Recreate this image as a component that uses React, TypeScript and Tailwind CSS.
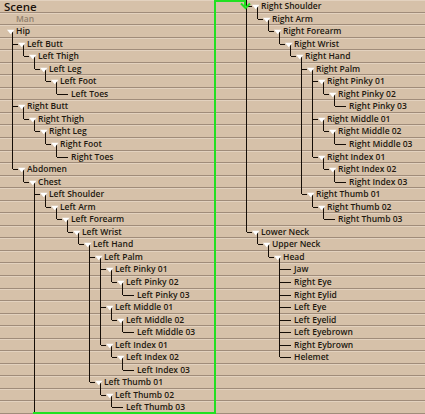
type Bone = { name: string; children?: Bone[] };
type Row = { name: string; level: number; leaf: boolean; last: boolean; rails: boolean[] };

const bone = (name: string, children?: Bone[]): Bone => ({ name, children });

const finger = (side: string, f: string) =>
  bone(`${side} ${f} 01`, [bone(`${side} ${f} 02`, [bone(`${side} ${f} 03`)])]);

const leg = (side: string) =>
  bone(`${side} Butt`, [
    bone(`${side} Thigh`, [bone(`${side} Leg`, [bone(`${side} Foot`, [bone(`${side} Toes`)])])]),
  ]);

const arm = (side: string) =>
  bone(`${side} Shoulder`, [
    bone(`${side} Arm`, [
      bone(`${side} Forearm`, [
        bone(`${side} Wrist`, [
          bone(`${side} Hand`, [
            bone(`${side} Palm`, [finger(side, "Pinky"), finger(side, "Middle"), finger(side, "Index")]),
            finger(side, "Thumb"),
          ]),
        ]),
      ]),
    ]),
  ]);

const face = ["Jaw", "Right Eye", "Right Eylid", "Left Eye", "Left Eyelid", "Left Eyebrown", "Right Eybrown", "Helemet"];

const hip = bone("Hip", [
  leg("Left"),
  leg("Right"),
  bone("Abdomen", [
    bone("Chest", [
      arm("Left"),
      arm("Right"),
      bone("Lower Neck", [bone("Upper Neck", [bone("Head", face.map((n) => bone(n)))])]),
    ]),
  ]),
]);

function flatten(b: Bone, level: number, last: boolean, rails: boolean[], out: Row[]) {
  const kids = b.children ?? [];
  out.push({ name: b.name, level, leaf: kids.length === 0, last, rails });
  const next = [...rails];
  next[level] = level > 0 && !last;
  kids.forEach((c, i) => flatten(c, level + 1, i === kids.length - 1, next, out));
  return out;
}

const rows = flatten(hip, 0, true, [], []);
const leftRows = rows.slice(0, 31);
const rightRows = rows.slice(31);

const rowCls =
  "flex min-h-0 items-center shadow-[inset_0_-1px_0_#a08c7a,inset_0_1px_0_#e3d2bf]";

function BoneRow({ row, base }: { row: Row; base: number }) {
  const textX = base + 16 + 11 * row.level;
  const at = (lvl: number) => base + 1 + 11 * lvl + 0.5;
  return (
    <div className={rowCls}>
      <svg width={textX} className="h-full shrink-0" shapeRendering="crispEdges" stroke="#150d06">
        {row.rails.map((on, k) =>
          on ? <line key={k} x1={at(k)} x2={at(k)} y1="0" y2="100%" /> : null
        )}
        {row.level > 0 && (
          <>
            <line x1={at(row.level)} x2={at(row.level)} y1="0" y2={row.last ? "50%" : "100%"} />
            <line x1={at(row.level)} x2={row.leaf ? textX - 3 : textX - 9} y1="50%" y2="50%" />
          </>
        )}
        {!row.leaf && (
          <>
            <line x1={at(row.level + 1)} x2={at(row.level + 1)} y1="50%" y2="100%" />
            <svg x={textX - 9} y="50%" overflow="visible">
              <polygon points="0,-1.5 7.5,-1.5 3.75,3" fill="#ffffff" stroke="none" shapeRendering="auto" />
            </svg>
          </>
        )}
      </svg>
      <span className="whitespace-nowrap text-[8.5px] font-semibold leading-none text-[#22180f]">{row.name}</span>
    </div>
  );
}

export default function App() {
  return (
    <div className="relative flex h-[414px] w-[425px] overflow-hidden bg-[#d6c1a9] font-['Open_Sans',sans-serif]">
      <div className="grid w-[214px] shrink-0 grid-rows-[repeat(33,minmax(0,1fr))]">
        <div className={rowCls}>
          <span className="pl-[4px] text-[11.5px] font-semibold leading-none text-[#1b130c]">Scene</span>
        </div>
        <div className={rowCls}>
          <span className="pl-[16px] text-[8.5px] font-semibold leading-none text-[#8f7e6c]">Man</span>
        </div>
        {leftRows.map((r) => (
          <BoneRow key={r.name} row={r} base={0} />
        ))}
      </div>
      <div className="w-[2px] shrink-0 bg-[#22e022]" />
      <div className="grid flex-1 grid-rows-[repeat(33,minmax(0,1fr))]">
        {rightRows.map((r) => (
          <BoneRow key={r.name} row={r} base={-4} />
        ))}
        {[0, 1, 2, 3].map((i) => (
          <div key={i} className={rowCls} />
        ))}
      </div>
      {/* green wrap connector: bottom of the left column up and over into the right one */}
      <svg className="pointer-events-none absolute inset-0" width="425" height="414" fill="none" stroke="#22e022" strokeWidth="2">
        <path d="M33 413 H215" />
        <path d="M214 1 H245 V6" />
        <path d="M241 3.5 L245.5 8 L250 3.5" strokeLinejoin="miter" />
      </svg>
    </div>
  );
}
